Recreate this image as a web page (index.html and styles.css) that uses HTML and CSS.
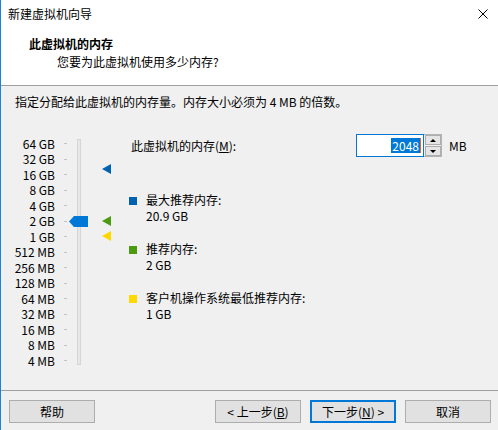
FILE: index.html
```html
<!doctype html>
<html lang="zh-CN">
  <head>
    <meta charset="UTF-8" />
    <meta name="viewport" content="width=device-width, initial-scale=1.0" />
    <link rel="stylesheet" href="styles.css">
    <title>新建虚拟机向导</title>
  </head>
  <body>
    <div class="window">
      <!-- Title bar -->
      <div class="titlebar">
        <span class="title">新建虚拟机向导</span>
        <svg class="close" width="10" height="10" viewBox="0 0 10 10">
          <path d="M0.5 0.5 L9.5 9.5 M9.5 0.5 L0.5 9.5" stroke="#000" stroke-width="1" />
        </svg>
      </div>

      <!-- White wizard header -->
      <header class="header">
        <h1>此虚拟机的内存</h1>
        <p>您要为此虚拟机使用多少内存?</p>
      </header>

      <div class="body">
        <p class="intro">指定分配给此虚拟机的内存量。内存大小必须为 4 MB 的倍数。</p>

        <div class="main">
          <!-- Memory slider -->
          <div class="scale">
            <ul class="steps">
              <li><span>64 GB</span><i></i></li>
              <li><span>32 GB</span><i></i></li>
              <li><span>16 GB</span><i></i></li>
              <li><span>8 GB</span><i></i></li>
              <li><span>4 GB</span><i></i></li>
              <li><span>2 GB</span><i></i></li>
              <li><span>1 GB</span><i></i></li>
              <li><span>512 MB</span><i></i></li>
              <li><span>256 MB</span><i></i></li>
              <li><span>128 MB</span><i></i></li>
              <li><span>64 MB</span><i></i></li>
              <li><span>32 MB</span><i></i></li>
              <li><span>16 MB</span><i></i></li>
              <li><span>8 MB</span><i></i></li>
              <li><span>4 MB</span><i></i></li>
            </ul>
            <div class="track"></div>
            <svg class="thumb" width="19" height="11" viewBox="0 0 19 11">
              <polygon points="0,5.5 5,0 19,0 19,11 5,11" fill="#0078d7" />
            </svg>
            <svg class="marker" style="top: 34px" width="9" height="10" viewBox="0 0 9 10">
              <polygon points="0,5 9,0 9,10" fill="#0063b1" />
            </svg>
            <svg class="marker" style="top: 86px" width="9" height="10" viewBox="0 0 9 10">
              <polygon points="0,5 9,0 9,10" fill="#4c9a0f" />
            </svg>
            <svg class="marker" style="top: 101px" width="9" height="10" viewBox="0 0 9 10">
              <polygon points="0,5 9,0 9,10" fill="#ffd800" />
            </svg>
          </div>

          <!-- Value and recommendations -->
          <div class="settings">
            <div class="memory-row">
              <label class="memory-label">此虚拟机的内存(<u>M</u>):</label>
              <div class="number">
                <span class="value"><span class="selected">2048</span><span class="caret"></span></span>
              </div>
              <div class="spin">
                <button class="spin-btn"><span class="arrow up"></span></button>
                <button class="spin-btn"><span class="arrow down"></span></button>
              </div>
              <span class="unit">MB</span>
            </div>

            <div class="legend">
              <div class="legend-item">
                <span class="swatch blue"></span>
                <div>
                  <div>最大推荐内存:</div>
                  <div>20.9 GB</div>
                </div>
              </div>
              <div class="legend-item">
                <span class="swatch green"></span>
                <div>
                  <div>推荐内存:</div>
                  <div>2 GB</div>
                </div>
              </div>
              <div class="legend-item">
                <span class="swatch yellow"></span>
                <div>
                  <div>客户机操作系统最低推荐内存:</div>
                  <div>1 GB</div>
                </div>
              </div>
            </div>
          </div>
        </div>
      </div>

      <!-- Buttons -->
      <footer class="footer">
        <button class="btn">帮助</button>
        <div class="nav">
          <button class="btn">&lt; 上一步(<u>B</u>)</button>
          <button class="btn default">下一步(<u>N</u>) &gt;</button>
          <button class="btn">取消</button>
        </div>
      </footer>
    </div>
  </body>
</html>
```

FILE: styles.css
```css
html,
body {
  margin: 0;
  height: 100%;
}

body {
  font-family: "Noto Sans CJK SC", sans-serif;
  font-size: 12px;
  line-height: 16px;
  color: #000;
  background: #f0f0f0;
}

.window {
  display: flex;
  flex-direction: column;
  width: 497px;
  height: 430px;
  border-left: 1px solid #1883d7;
  background: #f0f0f0;
}

.titlebar {
  display: flex;
  align-items: center;
  justify-content: space-between;
  height: 30px;
  padding: 0 10px 2px 7px;
  box-sizing: border-box;
  background: #fff;
}

.close {
  display: block;
}

.header {
  background: #fff;
  padding: 6px 0 15px;
  border-bottom: 1px solid #a0a0a0;
}

.header h1 {
  margin: 0 0 2px 28px;
  font-size: 12px;
  font-weight: bold;
  line-height: 16px;
}

.header p {
  margin: 0 0 0 56px;
}

.body {
  flex: 1;
}

.intro {
  margin: 0;
  padding: 8px 0 0 14px;
}

.main {
  display: flex;
  margin-top: 20px;
}

/* Slider */
.scale {
  position: relative;
  width: 127px;
  padding-top: 6px;
}

.steps {
  list-style: none;
  margin: 0;
  padding: 0;
}

.steps li {
  display: flex;
  align-items: center;
  height: 15.5px;
}

.steps span {
  width: 54px;
  text-align: right;
  margin-right: 9px;
}

.steps i {
  width: 3px;
  height: 1px;
  background: #c4c4c4;
}

.track {
  position: absolute;
  left: 76px;
  top: 9px;
  width: 2px;
  height: 224px;
  border: 1px solid #d6d6d6;
  background: #e7e7e7;
}

.thumb {
  position: absolute;
  left: 68px;
  top: 86px;
}

.marker {
  position: absolute;
  left: 101px;
}

/* Right side */
.settings {
  flex: 1;
  padding-top: 4px;
}

.memory-row {
  display: flex;
  align-items: center;
  height: 23px;
}

.memory-label {
  width: 225px;
  padding-left: 3px;
}

.number {
  display: flex;
  align-items: center;
  justify-content: flex-end;
  width: 66px;
  height: 21px;
  border: 1px solid #0078d7;
  background: #fff;
  padding-right: 2px;
  box-sizing: content-box;
  width: 64px;
}

.value {
  display: flex;
  align-items: center;
}

.selected {
  background: #0078d7;
  color: #fff;
  height: 15px;
  line-height: 15px;
  padding: 0 1px;
}

.caret {
  width: 1px;
  height: 15px;
  background: #f7630c;
}

.spin {
  display: flex;
  flex-direction: column;
  justify-content: space-between;
  width: 16px;
  height: 21px;
  border: 1px solid #b4b4b4;
  border-left: 0;
  padding: 0 0 0 1px;
  background: #f0f0f0;
}

.spin-btn {
  display: flex;
  align-items: center;
  justify-content: center;
  width: 16px;
  height: 10px;
  padding: 0;
  border: 1px solid #adadad;
  background: #e5e5e5;
}

.arrow {
  width: 0;
  height: 0;
  border-left: 3px solid transparent;
  border-right: 3px solid transparent;
}

.arrow.up {
  border-bottom: 3px solid #000;
}

.arrow.down {
  border-top: 3px solid #000;
}

.unit {
  margin-left: 7px;
}

.legend {
  display: flex;
  flex-direction: column;
  gap: 17px;
  margin-top: 35px;
}

.legend-item {
  display: flex;
  align-items: flex-start;
}

.swatch {
  width: 8px;
  height: 8px;
  margin: 5px 9px 0 1px;
}

.swatch.blue {
  background: #0063b1;
}

.swatch.green {
  background: #4c9a0f;
}

.swatch.yellow {
  background: #ffd800;
}

/* Footer buttons */
.footer {
  display: flex;
  justify-content: space-between;
  height: 40px;
  padding: 9px 7px 0 8px;
  box-sizing: border-box;
  border-top: 1px solid #a0a0a0;
}

.nav {
  display: flex;
  gap: 9px;
}

.btn {
  width: 86px;
  height: 23px;
  padding: 0;
  border: 1px solid #adadad;
  background: #e1e1e1;
  font-family: inherit;
  font-size: 12px;
  color: #000;
}

.btn.default {
  border: 2px solid #0078d7;
}
```
